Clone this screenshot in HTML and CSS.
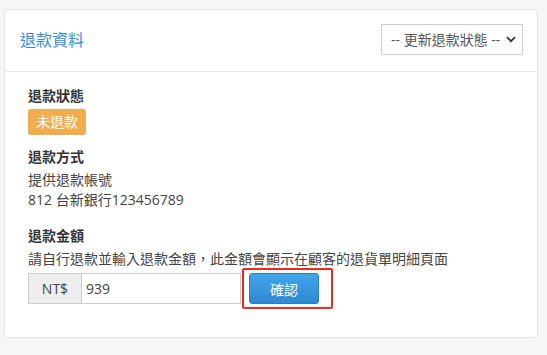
FILE: index.html
```html
<!DOCTYPE html>
<html lang="zh-Hant">
<head>
    <meta charset="UTF-8">
    <meta name="viewport" content="width=device-width, initial-scale=1.0">
    <title>退款資料</title>
    <link rel="stylesheet" href="styles.css">
</head>
<body>
    <div class="panel">
        <div class="panel-header">
            <h3 class="panel-title">退款資料</h3>
            <div class="select-wrap">
                <select class="status-select">
                    <option>-- 更新退款狀態 --</option>
                    <option>已退款</option>
                    <option>未退款</option>
                </select>
                <svg class="select-arrow" width="10" height="7" viewBox="0 0 10 7">
                    <path d="M1 1.2 L5 5.2 L9 1.2" fill="none" stroke="#333" stroke-width="1.8"/>
                </svg>
            </div>
        </div>
        <div class="panel-body">
            <div class="field">
                <div class="field-label">退款狀態</div>
                <span class="badge">未退款</span>
            </div>
            <div class="field">
                <div class="field-label">退款方式</div>
                <div class="field-text">提供退款帳號</div>
                <div class="field-text">812 台新銀行123456789</div>
            </div>
            <div class="field field-amount">
                <div class="field-label">退款金額</div>
                <div class="field-text">請自行退款並輸入退款金額，此金額會顯示在顧客的退貨單明細頁面</div>
                <div class="amount-row">
                    <span class="addon">NT$</span>
                    <input type="text" class="amount-input" value="939">
                    <span class="highlight">
                        <button class="btn-confirm">確認</button>
                    </span>
                </div>
            </div>
        </div>
    </div>
</body>
</html>
```

FILE: styles.css
```css
body {
    margin: 0;
    background-color: #f6f6f6;
    font-family: "Open Sans", "Noto Sans CJK TC", sans-serif;
    font-size: 14px;
    color: #444;
}

.panel {
    margin: 9px 9px 0 4px;
    background: white;
    border: 1px solid #e3e3e3;
    border-radius: 4px;
}

.panel-header {
    display: flex;
    justify-content: space-between;
    align-items: center;
    height: 61px;
    padding: 0 14px 0 15px;
    border-bottom: 1px solid #e6e6e6;
}

.panel-title {
    margin: 0;
    font-size: 16px;
    font-weight: normal;
    color: #2e8cd8;
    line-height: 22px;
    padding-bottom: 1px;
}

.select-wrap {
    position: relative;
    margin-bottom: 2px;
}

.status-select {
    appearance: none;
    -webkit-appearance: none;
    width: 142px;
    height: 31px;
    padding: 0 0 0 9px;
    font-family: "Open Sans", "Noto Sans CJK TC", sans-serif;
    font-size: 14px;
    color: #555;
    background: white;
    border: 1px solid #ccc;
    border-radius: 0;
}

.select-arrow {
    position: absolute;
    right: 7px;
    top: 12px;
    pointer-events: none;
}

.panel-body {
    padding: 14px 23px 28px;
}

.field {
    margin-bottom: 12px;
}

.field-amount {
    margin-top: 16px;
    margin-bottom: 0;
}

.field-label {
    font-weight: bold;
    color: #333;
    line-height: 20px;
    margin-bottom: 3px;
}

.field-text {
    line-height: 20px;
    color: #444;
}

.field-label + .field-text {
    margin-top: 2px;
}

.badge {
    display: inline-block;
    background-color: #f0ad4e;
    color: white;
    padding: 3px 8px;
    line-height: 20px;
    border-radius: 3px;
}

.amount-row {
    display: flex;
    align-items: center;
    margin-top: -1px;
}

.addon {
    width: 52px;
    height: 29px;
    line-height: 29px;
    text-align: center;
    background-color: #eee;
    border: 1px solid #ccc;
    color: #444;
}

.amount-input {
    box-sizing: border-box;
    width: 159px;
    height: 31px;
    padding: 0 0 0 4px;
    border: 1px solid #ccc;
    border-left: none;
    font-family: "Open Sans", "Noto Sans CJK TC", sans-serif;
    font-size: 14px;
    color: #444;
    outline: none;
}

.highlight {
    display: inline-flex;
    margin-left: 1px;
    padding: 3px 12px 3px 5px;
    border: 2px solid #f0281e;
    border-radius: 2px;
}

.btn-confirm {
    width: 70px;
    height: 31px;
    padding: 0;
    font-family: "Open Sans", "Noto Sans CJK TC", sans-serif;
    font-size: 14px;
    color: white;
    background: linear-gradient(#42a5ec, #2f88d0);
    border: 1px solid #2b7dc0;
    border-radius: 3px;
    cursor: pointer;
}
```
